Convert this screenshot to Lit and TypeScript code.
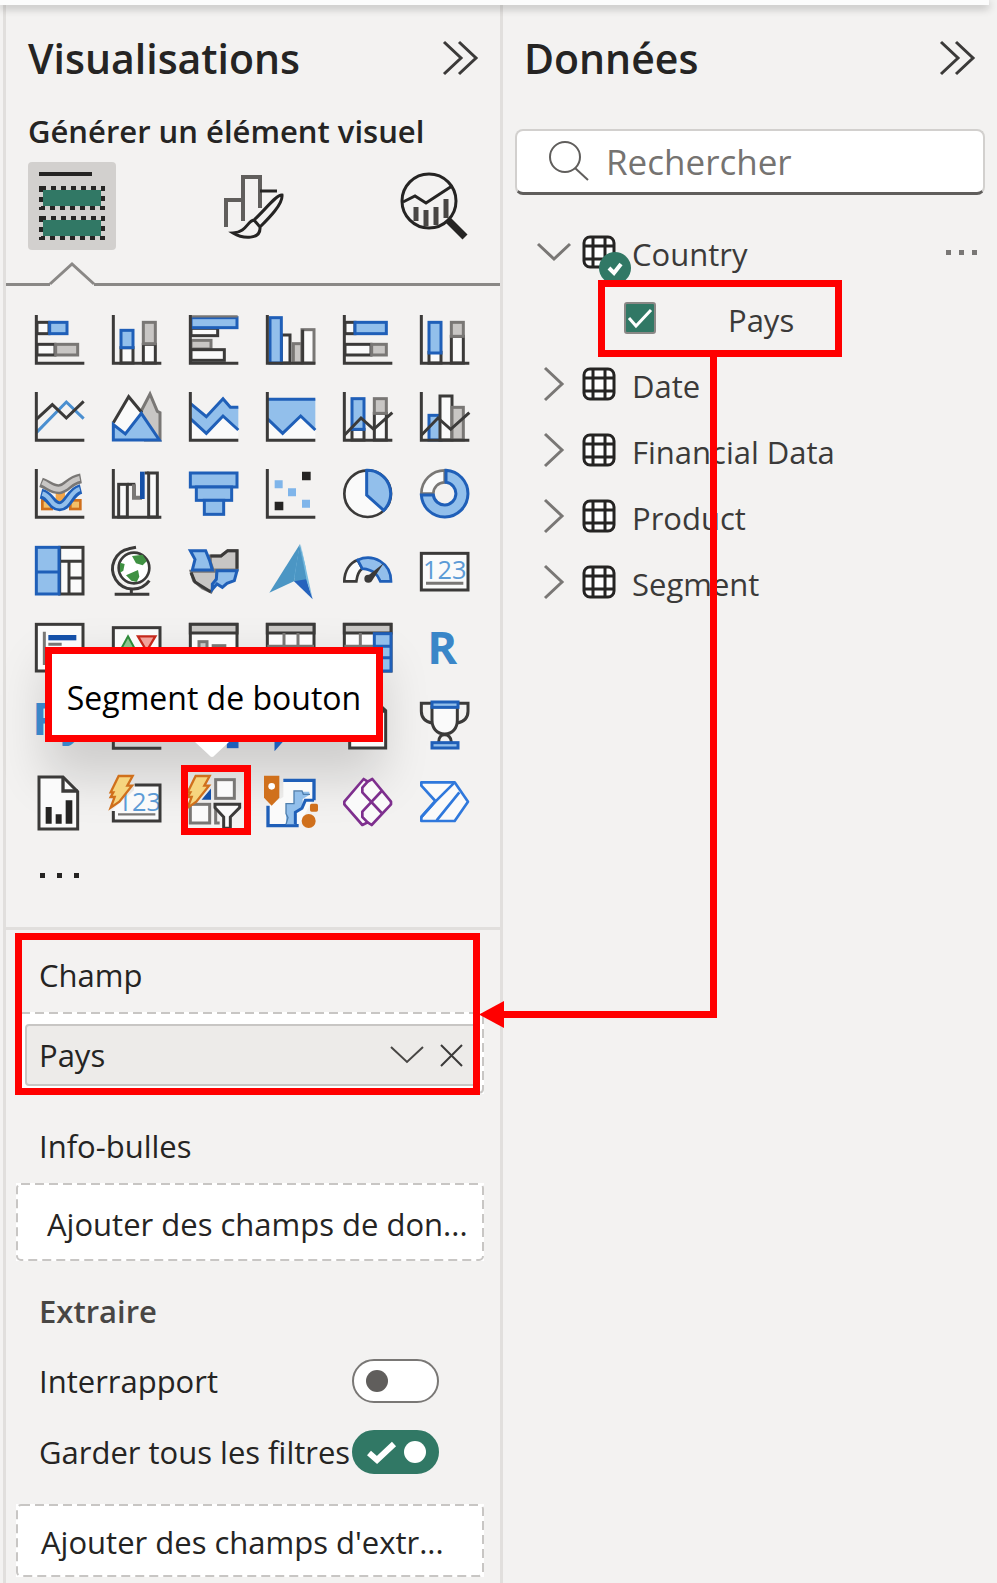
import { LitElement, html, svg, css, nothing } from "lit";
import { customElement, property, state } from "lit/decorators.js";

const D = "#3b3a39", B = "#1f5fb8", F = "#92bfeb", G = "#c8c6c4", S = "#797775", W = "#fafafa";

const box = (x: number, y: number, w: number, h: number, fill = W, stroke = D) =>
  svg`<rect x=${x} y=${y} width=${w} height=${h} fill=${fill} stroke=${stroke} stroke-width="9"/>`;
const line = (d: string, stroke = D, width = 9) =>
  svg`<path d=${d} fill="none" stroke=${stroke} stroke-width=${width}/>`;
const shape = (d: string, fill: string, stroke = "none") =>
  svg`<path d=${d} fill=${fill} stroke=${stroke} stroke-width="9"/>`;
const axes = line("M4 0V145H148");
const bolt = svg`<path d="M20 -3H62L46 26H60L22 74L-4 92L8 60H-4L4 46H-4Z" fill="#f6d57f" stroke="#d0701c" stroke-width="7"/>`;

const visuals: { name: string; art: unknown }[] = [
  { name: "Graphique à barres empilées", art: svg`${box(6, 22, 36, 34)}${box(44, 22, 52, 34, F, B)}${box(6, 88, 54, 32)}${box(62, 88, 66, 32, G, S)}${axes}` },
  { name: "Histogramme empilé", art: svg`${box(27, 98, 36, 46)}${box(27, 46, 36, 52, F, B)}${box(94, 88, 36, 56)}${box(94, 22, 36, 64, G, S)}${axes}` },
  { name: "Graphique à barres groupées", art: svg`${box(6, 40, 80, 22)}${box(6, 76, 60, 26, G, S)}${box(6, 104, 100, 32)}${box(6, 8, 138, 30, F, B)}${line("M4 4H146", S, 7)}${axes}` },
  { name: "Histogramme groupé", art: svg`${box(46, 60, 26, 84)}${box(82, 86, 26, 58, G, S)}${box(108, 44, 36, 100, W, S)}${line("M110 44V144", D)}${box(12, 8, 34, 136, F, B)}${axes}` },
  { name: "Graphique à barres 100 %", art: svg`${box(6, 22, 30, 34)}${box(36, 22, 94, 34, F, B)}${box(6, 88, 78, 32)}${box(86, 88, 44, 32, G, S)}${axes}` },
  { name: "Histogramme 100 %", art: svg`${box(27, 112, 36, 32)}${box(27, 22, 36, 92, F, B)}${box(94, 64, 36, 80)}${box(94, 22, 36, 42, G, S)}${axes}` },
  { name: "Graphique en courbes", art: svg`${line("M4 122L94 30L146 80", "#4a8fd0")}${line("M4 82L52 38L94 78L146 28")}${axes}` },
  { name: "Graphique en aires", art: svg`${shape("M86 60L114 6L136 58L144 62V144H100Z", G, S)}${shape("M4 100V90L50 14L88 60L60 130H20Z", W)}${line("M4 92L50 14L90 62")}${shape("M4 144V98L40 126L88 64L142 144Z", F, B)}` },
  { name: "Aires empilées", art: svg`${shape("M4 80L52 124L102 72L148 114V145H4Z", W)}${shape("M4 34L52 74L102 20L124 46H148V114L102 72L52 124L4 80Z", F)}${line("M4 34L52 74L102 20L124 46H148M148 114L102 72L52 124L4 80", B)}${axes}` },
  { name: "Aires 100 %", art: svg`${shape("M4 80L50 124L104 72L148 114V145H4Z", W)}${shape("M4 22H148V114L104 72L50 124L4 80Z", F)}${line("M4 22H148M148 114L104 72L50 124L4 80", B)}${axes}` },
  { name: "Courbes et histogramme empilé", art: svg`${box(27, 112, 36, 32)}${box(27, 20, 36, 92, F, B)}${box(94, 64, 36, 80)}${box(94, 20, 36, 44, G, S)}${line("M4 130L54 78L92 112L148 62")}${axes}` },
  { name: "Courbes et histogramme groupé", art: svg`${box(27, 70, 36, 74, F, B)}${box(60, 12, 36, 132)}${box(96, 46, 34, 98, G, S)}${line("M4 130L54 78L92 112L148 62")}${axes}` },
  { name: "Graphique de ruban", art: svg`<rect x="22" y="94" width="28" height="26" fill="#f3bf68" stroke="#d0701c" stroke-width="8"/><rect x="106" y="94" width="30" height="26" fill="#f3bf68" stroke="#d0701c" stroke-width="8"/><rect x="62" y="70" width="28" height="26" fill="#f3a648"/>${line("M18 40C44 50 56 64 76 60S104 34 138 28", S, 30)}${line("M22 40C44 50 56 64 76 60S104 34 134 28", G, 15)}${line("M18 74C50 82 48 112 74 112S104 68 138 60", B, 30)}${line("M22 74C50 82 48 112 74 112S104 68 134 60", F, 13)}${axes}` },
  { name: "Graphique en cascade", art: svg`${box(20, 46, 26, 98)}${line("M46 46H70")}${line("M66 46V86H90", S, 12)}${box(110, 12, 26, 132)}${line("M98 12H110")}<rect x="84" y="8" width="14" height="82" fill="#1450a8"/>${axes}` },
  { name: "Entonnoir", art: svg`${box(4, 12, 140, 42, F, B)}${box(22, 54, 106, 40, F, B)}${box(46, 94, 58, 42, F, B)}` },
  { name: "Nuage de points", art: svg`<path d="M108 8h26v26h-26zM26 98h26v26H26z" fill="#252423"/><path d="M26 34h24v24H26zM66 58h24v24H66zM108 92h24v24h-24z" fill="#7fb5ea"/>${axes}` },
  { name: "Graphique en secteurs", art: svg`<circle cx="74" cy="74" r="70" fill=${W} stroke=${D} stroke-width="8"/>${shape("M71 4V78L122 124A70 70 0 0 0 71 4Z", F, B)}` },
  { name: "Graphique en anneau", art: svg`<path d="M74 4A70 70 0 0 0 4 74H40A34 34 0 0 1 74 40Z" fill=${W} stroke=${S} stroke-width="8"/>${shape("M78 4A70 70 0 1 1 4 78H40A34 34 0 1 0 78 40Z", F, B)}` },
  { name: "Treemap", art: svg`${box(74, 4, 70, 140)}${line("M74 46H144M102 46V144M102 96H144")}${box(4, 4, 68, 140, F, B)}${line("M4 78H72", B)}` },
  { name: "Carte", art: svg`<circle cx="66" cy="66" r="46" fill="#fff" stroke=${D} stroke-width="8"/><path d="M60 30L92 26L104 46L92 58L72 52ZM24 50L38 54L34 74L24 80ZM42 88L78 72L82 92L74 108L58 104Z" fill="#3f9142"/>${line("M72 4L50 8M52 8A61 61 0 1 0 112 104M58 128V144M8 145H112")}` },
  { name: "Carte choroplèthe", art: svg`${shape("M6 76H84L82 100L66 138L40 126L14 104Z", G, S)}${shape("M64 30H96L116 14H144V72H72L64 48Z", G, S)}${line("M64 30H96L116 14H144V68M6 80L18 108L66 138")}${shape("M4 14H50L62 44L70 72H10L18 40Z", F, B)}${shape("M84 74H144L136 104L114 112L100 124L84 114L70 130V114L82 100Z", F, B)}` },
  { name: "Azure Map", art: svg`<path d="M102 -6L84 106L10 140Z" fill="#4b96c4"/><path d="M102 -6L118 60L124 110L84 96Z" fill="#66add6"/><path d="M100 0L128 128L84 106Z" fill="#4b96c4"/><path d="M104 -6L140 160L122 104Z" fill="#79bde0"/><path d="M84 106L120 100L140 160Z" fill="#2563bd"/>` },
  { name: "Jauge", art: svg`<path d="M4 106C4 76 20 50 44 42L58 68C46 76 42 90 40 106Z" fill=${W} stroke=${D} stroke-width="8"/><path d="M44 42C90 22 144 50 144 106H112C106 94 100 72 58 68Z" fill=${F} stroke=${B} stroke-width="8"/><path d="M66 96L122 52L86 106Z" fill=${D}/><circle cx="76" cy="98" r="12" fill=${D}/>` },
  { name: "Nouvelle carte", art: svg`${box(4, 22, 140, 110)}<text x="74" y="98" text-anchor="middle" font-size="76" fill="#5c9bd6">123</text>${line("M18 112H130", S)}` },
  { name: "Carte à plusieurs lignes", art: svg`${box(4, 4, 140, 140)}${line("M28 26V126M40 64H80", S)}<rect x="40" y="36" width="84" height="16" fill="#1450a8"/>` },
  { name: "Indicateur de performance clé", art: svg`${box(4, 14, 140, 130)}<path d="M48 40L72 84H24Z" fill="#8ec48f" stroke="#2f8a3b" stroke-width="6"/><path d="M78 40H130L104 84Z" fill="#f2a29b" stroke="#c5281c" stroke-width="7"/>` },
  { name: "Segment", art: svg`${box(4, 4, 140, 140)}${box(4, 4, 140, 26, G)}${box(30, 56, 24, 24, G, S)}${line("M68 68H112", S)}` },
  { name: "Table", art: svg`${box(4, 4, 140, 140)}${box(4, 4, 140, 26, G)}${line("M4 70H144M54 30V144M96 30V144", S)}` },
  { name: "Matrice", art: svg`${box(4, 4, 140, 140)}${box(4, 4, 140, 26, G)}${line("M4 70H92M52 30V144", S)}${box(94, 32, 50, 112, F, B)}${line("M94 70H144M94 104H144", B)}` },
  { name: "Visuel de script R", art: svg`<text x="22" y="124" font-size="136" font-weight="700" fill="#3a86c8">R</text>` },
  { name: "Visuel Python", art: svg`<text x="-8" y="106" font-size="136" font-weight="700" fill="#3a86c8">Py</text>` },
  { name: "Influenceurs clés", art: axes },
  { name: "Arborescence hiérarchique", art: svg`${box(118, 112, 26, 28, B, B)}${box(4, 60, 36, 40, F, B)}` },
  { name: "Questions et réponses", art: svg`${shape("M10 20H140V108H60L30 142V108H10Z", B, B)}` },
  { name: "Récit", art: svg`${shape("M20 4H98L128 32V144H20Z", W, D)}${line("M98 4V34H128")}` },
  { name: "Métriques", art: svg`${shape("M34 10H4V34C4 54 16 66 38 70M112 10H144V34C144 54 132 66 110 70", "none", D)}${shape("M36 20V60C36 84 50 102 74 102S112 84 112 60V20Z", W, D)}${line("M56 126C56 112 64 104 74 104S94 112 94 126")}${box(36, 6, 78, 16, F, B)}${box(36, 128, 78, 16, F, B)}` },
  { name: "Rapport paginé", art: svg`${shape("M12 0H84L128 44V156H12Z", W, D)}${line("M84 0V42H128", D, 10)}<path d="M32 90h18v50H32zM62 112h18v28H62zM92 70h20v70H92z" fill="#252423"/>` },
  { name: "Carte (nouveau)", art: svg`${shape("M66 24H144V132H4V96L66 40Z", W)}<text x="82" y="102" text-anchor="middle" font-size="76" fill="#5c9bd6">123</text>${line("M68 24H144V132H4V102")}${line("M18 112H130", S, 7)}${bolt}` },
  { name: "Segment de bouton", art: svg`<path d="M64 40V66H42Z" fill="#1450a8" stroke="#1450a8" stroke-width="4"/>${box(80, 8, 56, 56, W, S)}${box(4, 82, 58, 56, W, S)}${line("M92 138H80V82", S)}${bolt}${shape("M78 82H152V92L124 120V154H104V120L78 92Z", W, D)}` },
  { name: "ArcGIS Maps", art: svg`<path d="M8 144V86L52 60V10H144V64L98 144Z" fill=${W}/><path d="M52 10H144V70M6 86V146H98" fill="none" stroke=${B} stroke-width="10"/><path d="M60 142V80H84V44H130V54L110 66V90L88 104V142Z" fill=${F}/>${line("M144 70H118L108 94L88 106V142", B)}${line("M60 142L66 122L60 110V80H84V42H108L112 52H132", "#4f7fae", 4)}<path d="M-6 -4H40V62L17 86L-6 62Z" fill="#d0701c"/><circle cx="17" cy="28" r="10" fill="#fff"/><circle cx="128" cy="132" r="21" fill="#d0701c"/><rect x="132" y="80" width="24" height="24" rx="5" fill="#d0701c"/>` },
  { name: "Power Apps", art: svg`<g fill=${W} stroke="#7e2f8e" stroke-width="8" stroke-linejoin="round"><path d="M62 6L4 74V82L58 144L74 136L86 144L144 82V74L88 6L74 14Z"/><path d="M74 14L58 32V46L116 108M116 42L58 104V120L74 136" fill="none"/></g>` },
  { name: "Power Automate", art: svg`<g fill=${W} stroke="#2f78dc" stroke-width="8" stroke-linejoin="round"><path d="M4 16H104L144 74L104 132H4V120L46 72L4 26Z"/><path d="M104 16L46 74M46 74L4 120M118 46L50 130" fill="none"/></g>` },
];

const doubleChevron = html`<svg class="dbl" viewBox="0 0 35 34" fill="none" stroke="#3b3a39" stroke-width="3"><path d="M1 1L18 17L1 33M16 1L33 17L16 33"/></svg>`;
const tableGlyph = html`<svg class="tbl" viewBox="0 0 34 34" fill="#fff" stroke="#252423" stroke-width="3"><rect x="2" y="2" width="30" height="30" rx="6"/><path d="M11 2V32M23 2V32M2 11H32M2 24H32" fill="none"/></svg>`;

const shared = css`
  *, *::before, *::after { box-sizing: border-box; }
  :host { display: block; }
  button { font: inherit; color: inherit; background: none; border: 0; padding: 0; margin: 0; display: grid; place-items: center; }
  svg { display: block; overflow: visible; }
  h1, h2, h3, ul { margin: 0; padding: 0; }
  ul { list-style: none; }
  .head { display: flex; justify-content: space-between; align-items: center; height: 48px; margin-top: 29px; }
  h1 { font-size: 41px; line-height: 48px; font-weight: 600; }
  .dbl { width: 35px; height: 34px; }
  .check { display: grid; }
  .check > * { grid-area: 1 / 1; place-self: center; margin: 0; }
  .check svg { pointer-events: none; }
  input[type="checkbox"] { appearance: none; }
`;

@customElement("viz-field-well")
class FieldWell extends LitElement {
  @property() value = "";
  @property({ type: Boolean }) filled = false;
  static styles = [shared, css`
    :host { display: flow-root; position: relative; background: #fff; }
    .dash { position: absolute; inset: 0; width: 100%; height: 100%; pointer-events: none; }
    .dash rect { x: 1px; y: 1px; width: calc(100% - 2px); height: calc(100% - 2px); fill: none; stroke: #c8c6c4; stroke-width: 2px; stroke-dasharray: 9 5; rx: 4px; }
    .chip { display: flex; align-items: center; gap: 16px; margin: 12px 5px 8px 9px; height: 62px; padding: 0 14px 0 12px; background: #edebe9; border: 2px solid #c8c6c4; border-radius: 4px; }
    .chip span { flex: 1; }
    .add { width: 100%; height: 100%; min-height: 73px; text-align: left; display: block; padding: 3px 0 0 25px; white-space: nowrap; }
    :host([wide]) .add { padding-left: 31px; min-height: 78px; }
  `];
  render() {
    return html`
      ${this.filled
        ? html`<div class="chip"><span>${this.value}</span>
            <button aria-label="Options du champ"><svg width="34" height="18" viewBox="0 0 34 18" fill="none" stroke="#484644" stroke-width="2"><path d="M1 1L17 16L33 1"/></svg></button>
            <button aria-label="Supprimer le champ"><svg width="23" height="23" viewBox="0 0 23 23" fill="none" stroke="#3b3a39" stroke-width="2"><path d="M1 1L22 22M22 1L1 22"/></svg></button>
          </div>`
        : html`<button class="add">${this.value}</button>`}
      <svg class="dash" aria-hidden="true"><rect/></svg>`;
  }
}

@customElement("viz-panel")
class VizPanel extends LitElement {
  @state() private cross = false;
  @state() private keep = true;
  static styles = [shared, css`
    .head, h2, .tabs { margin-left: 22px; margin-right: 22px; }
    h2 { font-size: 31px; line-height: 40px; font-weight: 600; margin-top: 29px; white-space: nowrap; }
    .tabs { display: flex; justify-content: space-between; margin-top: 11px; }
    .tabs button { width: 88px; height: 88px; border-radius: 4px; }
    .tabs .on { background: #d2d0ce; }
    .notch { display: flex; align-items: flex-end; margin-top: 11px; height: 25px; }
    .notch i { height: 3px; background: #8a8886; width: 44px; }
    .notch i:last-child { flex: 1; }
    .gallery { position: relative; margin: 29px 29px 0; }
    .gallery::before { content: ""; position: absolute; left: 30px; top: 352px; width: 298px; height: 75px; box-shadow: 0 16px 48px 20px rgba(0, 0, 0, .15); }
    .grid { position: relative; display: grid; grid-template-columns: repeat(6, 50px); gap: 27px; }
    .grid button { position: relative; }
    .picked::after { content: ""; position: absolute; inset: -12px -12px -8px -8px; border: 7px solid #f00; }
    .grid svg { width: 50px; height: 50px; }
    .tip { position: absolute; left: 10px; top: 332px; width: 338px; height: 95px; display: grid; place-items: center; padding-top: 6px; background: #fff; border: 7px solid #f00; color: #000; font-size: 32px; white-space: nowrap; }
    .tip svg { position: absolute; top: 88px; left: 143px; }
    .more { width: 50px; height: 50px; margin: 23px 0 27px 29px; }
    .fields { border-top: 3px solid #e1dfdd; padding: 25px 16px 0 10px; }
    .boxed { position: relative; }
    .boxed::after { content: ""; position: absolute; left: -1px; right: 4px; top: -22px; bottom: -1px; border: 7px solid #f00; pointer-events: none; }
    h3 { font-size: 31px; line-height: 40px; font-weight: 400; padding-left: 23px; margin-bottom: 17px; }
    .gap { margin-top: 32px; }
    h3.strong { font-weight: 600; color: #484644; margin-top: 30px; margin-bottom: 28px; }
    .row { display: flex; justify-content: space-between; align-items: center; height: 44px; margin: 0 45px 27px 23px; white-space: nowrap; }
    .row .check { width: 87px; flex: none; }
    .row input { width: 87px; height: 44px; border-radius: 22px; border: 2px solid #797775; background: #fff; }
    .row input:checked { background: #317865; border-color: #317865; }
    .last { margin-top: 30px; }
  `];
  private toggle(id: string, label: string, on: boolean, set: (v: boolean) => void) {
    return html`<div class="row"><label for=${id}>${label}</label>
      <span class="check"><input id=${id} type="checkbox" role="switch" .checked=${on} @change=${(e: Event) => set((e.target as HTMLInputElement).checked)}>
        <svg width="87" height="44" viewBox="0 0 87 44" aria-hidden="true">${on
          ? svg`<path d="M17 23L25 30L42 14" fill="none" stroke="#fff" stroke-width="6"/><circle cx="63" cy="22" r="11" fill="#fff"/>`
          : svg`<circle cx="25" cy="22" r="11" fill="#605e5c"/>`}</svg></span></div>`;
  }
  render() {
    return html`
      <div class="head"><h1>Visualisations</h1><button aria-label="Réduire le volet">${doubleChevron}</button></div>
      <h2>Générer un élément visuel</h2>
      <div class="tabs">
        <button class="on" aria-label="Générer un visuel"><svg width="66" height="68" viewBox="0 0 66 68">
          <path d="M0 2H53" stroke="#252423" stroke-width="4"/>
          <g fill="#317865" stroke="#d2d0ce" stroke-width="4"><rect x="2" y="16" width="62" height="20"/><rect x="2" y="46" width="62" height="20"/></g>
          <g fill="none" stroke="#252423" stroke-width="4" stroke-dasharray="5 5"><rect x="2" y="16" width="62" height="20"/><rect x="2" y="46" width="62" height="20"/></g></svg></button>
        <button aria-label="Mettre en forme"><svg width="61" height="64" viewBox="0 0 61 64" fill="none" stroke="#605e5c">
          <path d="M3 53V26H19M20 47V3H37V34" stroke-width="4"/><path d="M37 17H54" stroke="#252423" stroke-width="3"/>
          <path d="M59 21C54 20 42 36 31 46L37 53C46 44 60 30 59 21ZM31 46C24 47 24 58 10 59C20 65 38 66 37 53" fill="#f3f2f1" stroke="#252423" stroke-width="3"/></svg></button>
        <button aria-label="Analytique"><svg width="66" height="68" viewBox="0 0 66 68" fill="none" stroke="#252423" stroke-width="3">
          <circle cx="28" cy="29" r="27"/><path d="M2 30L14 24L25 31L51 14"/><path d="M15 35V49M25 38V54M35 35V53M45 27V46" stroke-width="5" stroke="#484644"/><path d="M47 48L64 65" stroke-width="7"/></svg></button>
      </div>
      <div class="notch"><i></i><svg width="44" height="25" viewBox="0 0 44 25" fill="none" stroke="#8a8886" stroke-width="3"><path d="M0 23L22 3L44 23"/></svg><i></i></div>
      <div class="gallery">
        <div class="grid">${visuals.map((v) => html`<button class=${v.name === "Segment de bouton" ? "picked" : ""} aria-label=${v.name}>
          <svg viewBox="0 0 150 150">${v.art}</svg></button>`)}</div>
        <div class="tip" role="tooltip">Segment de bouton<svg width="34" height="16" viewBox="0 0 34 16"><path d="M0 0H34L20 13Q17 17 14 13Z" fill="#fff"/></svg></div>
      </div>
      <button class="more" aria-label="Obtenir plus de visuels"><svg width="40" height="5" viewBox="0 0 40 5" fill="#252423"><path d="M0 0h5v5H0zM17 0h5v5h-5zM34 0h5v5h-5z"/></svg></button>
      <section class="fields">
        <div class="boxed"><h3>Champ</h3><viz-field-well filled value="Pays"></viz-field-well></div>
        <h3 class="gap">Info-bulles</h3>
        <viz-field-well wide value="Ajouter des champs de don..."></viz-field-well>
        <h3 class="strong">Extraire</h3>
        ${this.toggle("cross", "Interrapport", this.cross, (v) => (this.cross = v))}
        ${this.toggle("keep", "Garder tous les filtres", this.keep, (v) => (this.keep = v))}
        <viz-field-well class="last" value="Ajouter des champs d'extr..."></viz-field-well>
      </section>`;
  }
}

@customElement("data-panel")
class DataPanel extends LitElement {
  static styles = [shared, css`
    .head { margin-left: 21px; margin-right: 22px; }
    .search { display: flex; align-items: center; gap: 16px; height: 66px; margin: 47px 12px 0 12px; padding-left: 32px; background: #fff; border: 2px solid #d2d0ce; border-bottom: 3px solid #605e5c; border-radius: 8px; }
    .search input { flex: 1; min-width: 0; border: 0; outline: 0; background: none; padding: 0; font: inherit; font-size: 35px; color: #605e5c; }
    .search input::placeholder { color: #757371; opacity: 1; }
    ul { margin-top: 24px; }
    li { display: flex; align-items: center; height: 66px; padding: 0 20px 0 33px; }
    .arrow { width: 36px; height: 34px; margin-right: 10px; }
    .ico { position: relative; margin-right: 16px; }
    .tbl { width: 34px; height: 34px; }
    .badge { position: absolute; left: 17px; top: 17px; }
    .name { flex: 1; padding-top: 3px; white-space: nowrap; color: #3b3a39; }
    .leaf { position: relative; margin-left: 95px; width: 244px; height: 66px; padding: 0 0 0 26px; }
    .leaf::after { content: ""; position: absolute; inset: -5px 0 -6px 0; border: 7px solid #f00; pointer-events: none; }
    .leaf input { width: 32px; height: 32px; background: #317865; border: 2px solid #8a8886; border-radius: 3px; }
    .leaf label { padding: 3px 0 0 72px; color: #3b3a39; }
  `];
  private row(name: string, open = false) {
    return html`<li>
      <button class="arrow" aria-label=${(open ? "Réduire " : "Développer ") + name} aria-expanded=${open ? "true" : "false"}><svg width="36" height="34" viewBox="0 0 36 34" fill="none" stroke="#797775" stroke-width="3"><path d=${open ? "M2 9L18 24L34 9" : "M9 1L26 17L9 33"}/></svg></button>
      <span class="ico">${tableGlyph}${open ? html`<svg class="badge" width="32" height="32" viewBox="0 0 32 32"><circle cx="16" cy="16" r="16" fill="#317865"/><path d="M10 16L15 21L22 12" fill="none" stroke="#fff" stroke-width="4"/></svg>` : nothing}</span>
      <span class="name">${name}</span>
      ${open ? html`<button aria-label="Plus d'options"><svg width="31" height="5" viewBox="0 0 31 5" fill="#797775"><path d="M0 0h5v5H0zM13 0h5v5h-5zM26 0h5v5h-5z"/></svg></button>` : nothing}
    </li>`;
  }
  render() {
    return html`
      <div class="head"><h1>Données</h1><button aria-label="Réduire le volet">${doubleChevron}</button></div>
      <label class="search"><svg width="41" height="41" viewBox="0 0 41 41" fill="none" stroke="#605e5c" stroke-width="2"><circle cx="16" cy="16" r="15"/><path d="M26 27L39 39"/></svg>
        <input type="search" placeholder="Rechercher" aria-label="Rechercher"></label>
      <ul>
        ${this.row("Country", true)}
        <li class="leaf"><span class="check"><input id="pays" type="checkbox" checked><svg width="32" height="32" viewBox="0 0 32 32" fill="none" stroke="#fff" stroke-width="3"><path d="M5 16L12 24L27 8"/></svg></span><label for="pays">Pays</label></li>
        ${["Date", "Financial Data", "Product", "Segment"].map((n) => this.row(n))}
      </ul>`;
  }
}

@customElement("app-root")
class AppRoot extends LitElement {
  static styles = css`
    * { box-sizing: border-box; }
    :host { display: block; position: relative; min-height: 100vh; background: #f3f2f1; color: #252423; font-family: "Segoe UI", "Open Sans", "Noto Sans", sans-serif; font-size: 31px; line-height: 40px; overflow: hidden; }
    .ribbon { position: relative; height: 5px; background: #fcfcfc; box-shadow: 0 3px 8px rgba(0, 0, 0, .3); margin-right: 8px; }
    .panes { display: grid; grid-template-columns: minmax(0, 1fr) minmax(0, 1fr); padding-left: 3px; min-height: calc(100vh - 5px); }
    .panes > * { border-left: 3px solid #e1dfdd; padding-bottom: 7px; }
    .link { position: absolute; left: 479px; top: 357px; display: block; pointer-events: none; }
  `;
  render() {
    return html`<div class="ribbon"></div>
      <main class="panes"><viz-panel></viz-panel><data-panel></data-panel></main>
      <svg class="link" width="238" height="671" viewBox="0 0 238 671" aria-hidden="true"><path d="M234.500 0V657.500H20" fill="none" stroke="#f00" stroke-width="7"/><path d="M0 657.500L25 644V671Z" fill="#f00"/></svg>`;
  }
}
